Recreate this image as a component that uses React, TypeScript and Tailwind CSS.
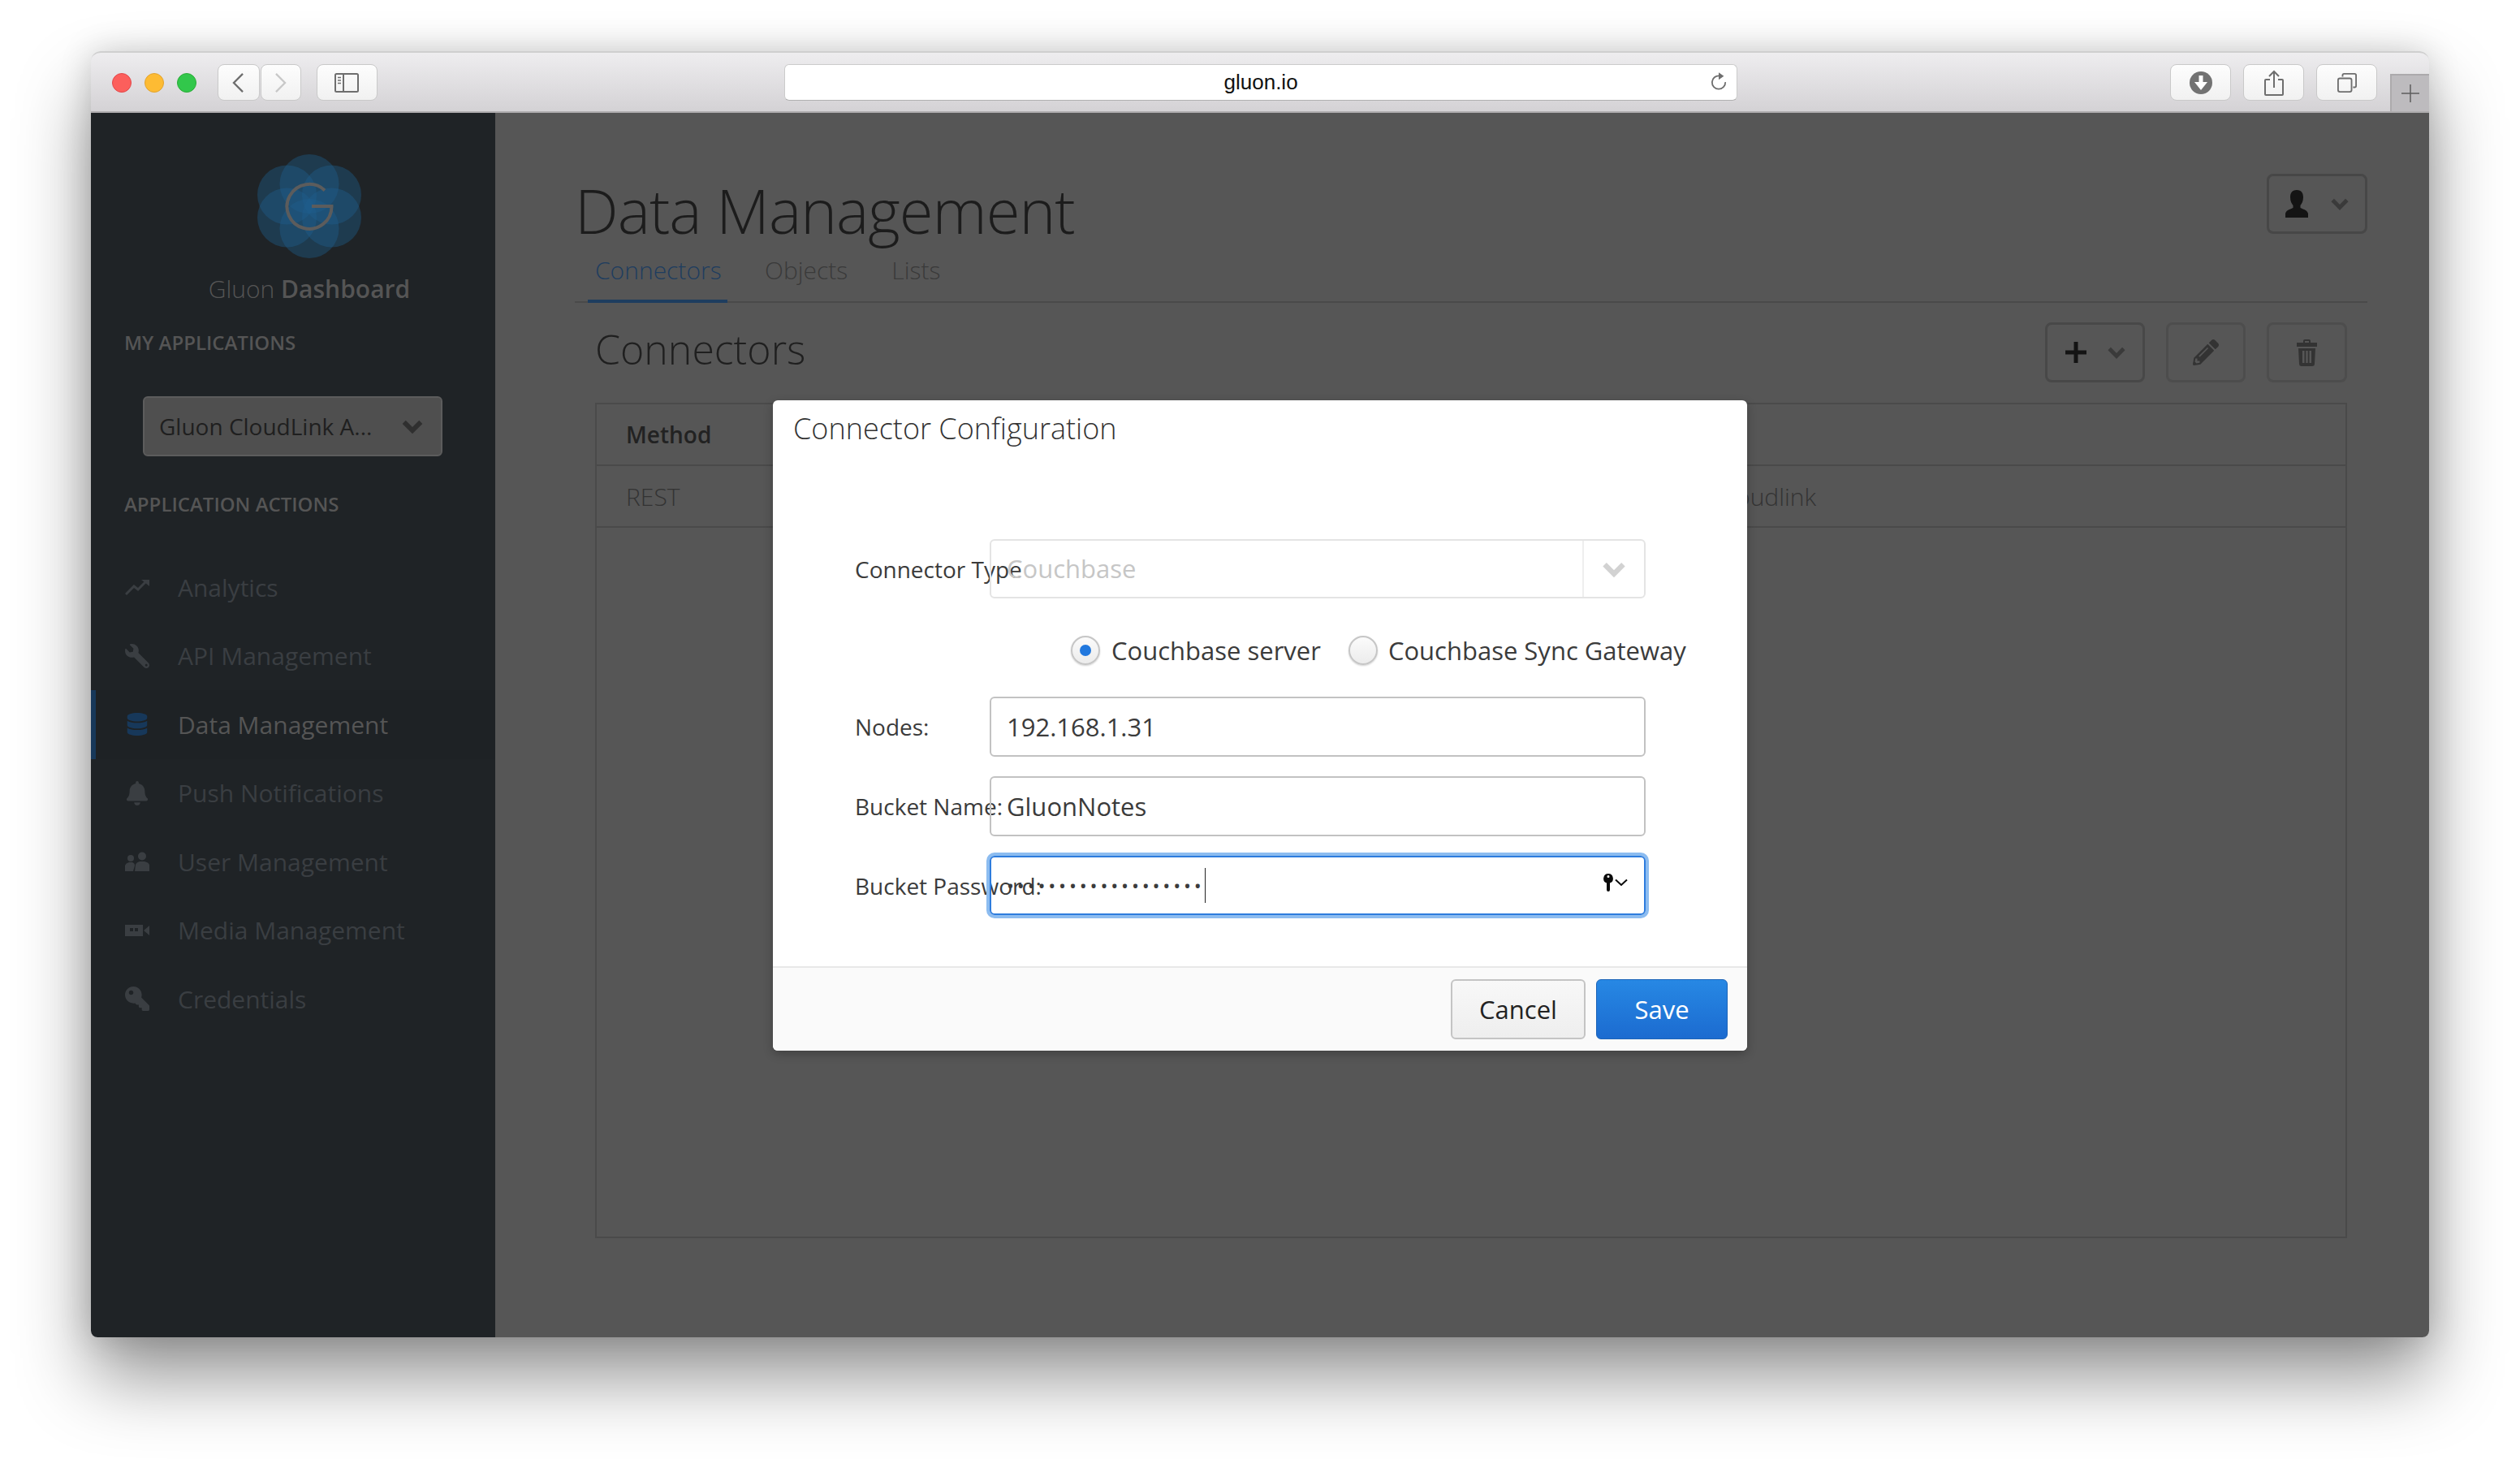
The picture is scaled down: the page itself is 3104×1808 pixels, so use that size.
import { ReactNode } from 'react';
import { FaBell, FaDatabase, FaKey, FaPencilAlt, FaWrench } from 'react-icons/fa';

function ToolButton({ className, children }: { className: string; children: ReactNode }) {
  return (
    <div
      className={`h-[45px] flex items-center justify-center rounded-[8px] border border-[#c9c9c9] bg-gradient-to-b from-[#fdfdfd] to-[#f1f1f1] ${className}`}
    >
      {children}
    </div>
  );
}

function TrendIcon() {
  return (
    <svg viewBox="0 0 30 20" className="w-[30px] h-[20px]" fill="none">
      <path d="M1 19 L11 9 L16 13 L26 3" stroke="#3a3e42" strokeWidth="3" />
      <path d="M20 1 H30 V9 Z" fill="#3a3e42" />
    </svg>
  );
}

function UsersIcon() {
  return (
    <svg viewBox="0 0 30 24" className="w-[30px] h-[24px]" fill="#3a3e42">
      <circle cx="7" cy="8" r="4" />
      <path d="M0 24 V17 Q1 14 5 13 H9 Q12 14 12 17 L10 24 Z" />
      <circle cx="21" cy="5.5" r="5" />
      <path d="M12 24 L13 16 Q14 13 18 12 H24 Q29 13 30 16 V24 Z" />
    </svg>
  );
}

function VideoIcon() {
  return (
    <svg viewBox="0 0 30 14" className="w-[30px] h-[14px]">
      <path fillRule="evenodd" fill="#3a3e42" d="M0 0 H22 V14 H0 Z M6 4 H10 V8 H6 Z M12 4 H16 V8 H12 Z" />
      <path d="M23 7 L30 1 V13 Z" fill="#3a3e42" />
    </svg>
  );
}

function PersonIcon() {
  return (
    <svg viewBox="0 0 28 34" className="w-[28px] h-[34px]" fill="#141414">
      <path d="M14 0 C20 0 22 4 22 9 C22 14 20 17 18.500 19 V22 C23 24 27 25 28 29 V34 H0 V29 C1 25 5 24 9.500 22 V19 C8 17 6 14 6 9 C6 4 8 0 14 0 Z" />
    </svg>
  );
}

function ChevronIcon({ className, color }: { className: string; color: string }) {
  return (
    <svg viewBox="0 0 20 14" className={className} fill="none">
      <path d="M2 3 L10 11 L18 3" stroke={color} strokeWidth="4.500" />
    </svg>
  );
}

function TrashIcon() {
  return (
    <svg viewBox="0 0 25 33" className="w-[25px] h-[33px]">
      <path fill="#333" fillRule="evenodd" d="M8 2 Q8 0 10 0 H15 Q17 0 17 2 V4 H25 V9 H0 V4 H8 Z M10 2 V4 H15 V2 Z" />
      <path fill="#333" fillRule="evenodd" d="M2 11 H23 L22 30 Q22 33 19 33 H6 Q3 33 3 30 Z M7 14 V29 H9.500 V14 Z M11.300 14 V29 H13.700 V14 Z M15.500 14 V29 H18 V14 Z" />
    </svg>
  );
}

function Radio({ checked }: { checked?: boolean }) {
  return (
    <span className="w-[36px] h-[36px] rounded-full border-2 border-[#c6c6c6] bg-gradient-to-b from-[#fbfbfb] to-[#ececec] shadow-[0_1px_2px_rgba(0,0,0,0.18)] flex items-center justify-center">
      {checked && <span className="w-[14px] h-[14px] rounded-full bg-[#2178de]" />}
    </span>
  );
}

function FormRow({ label, children }: { label: string; children: ReactNode }) {
  return (
    <div className="flex items-center">
      <div className="w-[267px] pl-[101px] shrink-0 whitespace-nowrap text-[28px] text-[#3b3b3b]">{label}</div>
      {children}
    </div>
  );
}

const navItems: { label: string; icon: ReactNode; active?: boolean }[] = [
  { label: 'Analytics', icon: <TrendIcon /> },
  { label: 'API Management', icon: <FaWrench className="text-[30px] text-[#3a3e42] -scale-x-100" /> },
  { label: 'Data Management', icon: <FaDatabase className="text-[28px] text-[#17385a]" />, active: true },
  { label: 'Push Notifications', icon: <FaBell className="text-[30px] text-[#3a3e42]" /> },
  { label: 'User Management', icon: <UsersIcon /> },
  { label: 'Media Management', icon: <VideoIcon /> },
  { label: 'Credentials', icon: <FaKey className="text-[30px] text-[#3a3e42] -scale-x-100" /> },
];

export default function App() {
  return (
    <div className="w-[3104px] h-[1808px] bg-white pt-[63px] pl-[112px] overflow-hidden font-['Open_Sans',sans-serif]">
      <div className="relative w-[2880px] h-[1584px] flex flex-col rounded-t-[12px] rounded-b-[8px] shadow-[0_50px_90px_rgba(0,0,0,0.42),0_0_40px_rgba(0,0,0,0.16)]">
        {/* browser toolbar */}
        <div className="h-[76px] shrink-0 flex items-start rounded-t-[12px] border-t-2 border-b-2 border-t-[#cfcfcf] border-b-[#aeacae] bg-gradient-to-b from-[#eeedef] to-[#d4d2d5] pt-[14px]">
          <div className="flex items-center gap-[16px] ml-[26px] h-[45px]">
            <span className="w-[24px] h-[24px] rounded-full border border-[#e3474a] bg-[#fc5f5c]" />
            <span className="w-[24px] h-[24px] rounded-full border border-[#e2a32d] bg-[#fdbb33]" />
            <span className="w-[24px] h-[24px] rounded-full border border-[#2bac37] bg-[#32c74b]" />
          </div>
          <ToolButton className="w-[52px] ml-[26px]">
            <svg viewBox="0 0 16 26" className="w-[15px] h-[24px]" fill="none">
              <path d="M14 1 L2 13 L14 25" stroke="#6e6e6e" strokeWidth="2.500" />
            </svg>
          </ToolButton>
          <ToolButton className="w-[50px] ml-[1px]">
            <svg viewBox="0 0 16 26" className="w-[15px] h-[24px]" fill="none">
              <path d="M2 1 L14 13 L2 25" stroke="#c8c8c8" strokeWidth="2.500" />
            </svg>
          </ToolButton>
          <ToolButton className="w-[75px] ml-[19px]">
            <svg viewBox="0 0 30 24" className="w-[30px] h-[24px]" fill="none" stroke="#6e6e6e" strokeWidth="2">
              <rect x="1" y="1" width="28" height="22" rx="1.500" />
              <path d="M11 1 V23" />
              <path d="M4 5.500 H8 M4 9 H8 M4 12.500 H8" strokeWidth="1.500" />
            </svg>
          </ToolButton>
          <div className="relative w-[1176px] h-[45px] ml-[501px] flex items-center justify-center rounded-[6px] border border-[#cbcbcb] border-b-[#b0b0b0] bg-white">
            <span className="text-[26px] font-['Liberation_Sans',sans-serif] text-[#111]">gluon.io</span>
            <svg viewBox="0 0 22 28" className="absolute right-[12px] top-[9px] w-[20px] h-[26px]" fill="none">
              <path d="M12 4.500 A9 9 0 1 0 20 13" stroke="#6e6e6e" strokeWidth="2" />
              <path d="M11 0 L18 5 L11 10 Z" fill="#6e6e6e" />
            </svg>
          </div>
          <ToolButton className="w-[75px] ml-[533px]">
            <svg viewBox="0 0 28 28" className="w-[28px] h-[28px]">
              <circle cx="14" cy="14" r="14" fill="#727272" />
              <path d="M11.500 5 H16.500 V13 H22 L14 23 L6 13 H11.500 Z" fill="#fff" />
            </svg>
          </ToolButton>
          <ToolButton className="w-[75px] ml-[15px]">
            <svg viewBox="0 0 24 32" className="w-[24px] h-[32px]" fill="none" stroke="#6e6e6e" strokeWidth="2">
              <path d="M7 12 H2 Q1 12 1 13 V30 Q1 31 2 31 H22 Q23 31 23 30 V13 Q23 12 22 12 H17" />
              <path d="M12 22 V2 M6 8 L12 2 L18 8" />
            </svg>
          </ToolButton>
          <ToolButton className="w-[75px] ml-[15px]">
            <svg viewBox="0 0 26 26" className="w-[24px] h-[24px]" fill="none" stroke="#6e6e6e" strokeWidth="2">
              <rect x="1" y="7" width="18" height="18" rx="2.500" />
              <path d="M7 5 V3 Q7 1 9 1 H23 Q25 1 25 3 V17 Q25 19 23 19 H21" />
            </svg>
          </ToolButton>
          <div className="ml-[16px] mt-[-1px] w-[48px] h-[46px] self-end flex items-center justify-center border-t-2 border-l-2 border-[#acaaac] bg-[#bdbbbe]">
            <svg viewBox="0 0 22 22" className="w-[22px] h-[22px]" fill="none" stroke="#5e5e5e" strokeWidth="1.500">
              <path d="M11 0 V22 M0 11 H22" />
            </svg>
          </div>
        </div>

        <div className="flex flex-1 min-h-0">
          {/* sidebar */}
          <div className="w-[498px] shrink-0 rounded-bl-[8px] bg-[#1f2326] flex flex-col">
            <div className="pl-[40px] pt-[51px] flex flex-col items-center">
              <svg viewBox="0 0 128 128" className="w-[128px] h-[128px]" fill="none">
                <g fill="#1f5e8f" fillOpacity="0.4">
                  <circle cx="64" cy="36.500" r="36.500" />
                  <circle cx="64" cy="91.500" r="36.500" />
                  <circle cx="36.500" cy="50" r="36.500" />
                  <circle cx="91.500" cy="50" r="36.500" />
                  <circle cx="36.500" cy="78" r="36.500" />
                  <circle cx="91.500" cy="78" r="36.500" />
                </g>
                <path d="M83 44.500 A27.500 27.500 0 1 0 91.500 64 H67" stroke="#5c5c5c" strokeWidth="4" />
              </svg>
              <div className="mt-[18px] text-[30px] leading-[40px] text-[#555] whitespace-nowrap">
                <span className="font-light">Gluon </span>
                <span className="font-semibold">Dashboard</span>
              </div>
            </div>
            <div className="pl-[41px] mt-[30px] text-[24px] leading-[32px] font-semibold text-[#555]">MY APPLICATIONS</div>
            <div className="ml-[64px] mt-[50px] w-[369px] h-[74px] rounded-[6px] border-2 border-[#5c5c5c] bg-[#4f4f4f] flex items-center justify-between pl-[18px] pr-[22px]">
              <span className="text-[28px] text-[#1f1f1f] whitespace-nowrap">Gluon CloudLink A...</span>
              <ChevronIcon className="w-[26px] h-[18px]" color="#2f2f2f" />
            </div>
            <div className="pl-[41px] mt-[43px] text-[24px] leading-[32px] font-semibold text-[#555]">APPLICATION ACTIONS</div>
            <div className="mt-[44px] flex flex-col">
              {navItems.map(item => (
                <div
                  key={item.label}
                  className={`h-[84.500px] flex items-center border-l-[6px] ${item.active ? 'border-[#17385a] bg-[#1e2225]' : 'border-transparent'}`}
                >
                  <span className="w-[101px] pl-[32px] pr-[31px] h-[32px] flex items-center justify-center shrink-0">{item.icon}</span>
                  <span className={`text-[30px] whitespace-nowrap ${item.active ? 'text-[#555]' : 'text-[#3a3e42]'}`}>{item.label}</span>
                </div>
              ))}
            </div>
          </div>

          {/* page behind the dialog */}
          <div className="flex-1 rounded-br-[8px] bg-[#565656] flex flex-col pl-[98px] pr-[76px]">
            <div className="flex justify-between items-start pt-[75px]">
              <h1 className="text-[76px] leading-[90px] font-light text-[#1c1c1c] tracking-[-1px] whitespace-nowrap pt-[-10px]">Data Management</h1>
              <div className="w-[124px] h-[74px] -mr-[0px] rounded-[8px] border-[3px] border-[#474747] flex items-center justify-center gap-[28px]">
                <PersonIcon />
                <ChevronIcon className="w-[22px] h-[16px]" color="#3a3a3a" />
              </div>
            </div>
            <div className="h-[69px] flex border-b-2 border-[#4a4a4a]">
              <div className="px-[9px] h-[69px] border-b-4 border-[#1e3d5f] w-[172px] ml-[16px] pt-[6px] text-[30px] font-light text-[#1e3d5f] text-center whitespace-nowrap">Connectors</div>
              <div className="ml-[46px] pt-[6px] text-[30px] font-light text-[#3a3a3a]">Objects</div>
              <div className="ml-[54px] pt-[6px] text-[30px] font-light text-[#3a3a3a]">Lists</div>
            </div>
            <div className="ml-[25px] mr-[25px] mt-[24px] flex justify-between items-start h-[99px]">
              <div className="text-[50px] leading-[66px] font-light text-[#1f1f1f]">Connectors</div>
              <div className="flex gap-[26px]">
                <div className="w-[123px] h-[74px] rounded-[8px] border-[3px] border-[#484848] flex items-center justify-center gap-[26px]">
                  <svg viewBox="0 0 26 26" className="w-[26px] h-[26px]" fill="#141414">
                    <path d="M10.500 0 H15.500 V10.500 H26 V15.500 H15.500 V26 H10.500 V15.500 H0 V10.500 H10.500 Z" />
                  </svg>
                  <ChevronIcon className="w-[22px] h-[16px]" color="#3a3a3a" />
                </div>
                <div className="w-[98px] h-[74px] rounded-[8px] border-[3px] border-[#4d4d4d] flex items-center justify-center">
                  <FaPencilAlt className="text-[32px] text-[#333]" />
                </div>
                <div className="w-[99px] h-[74px] rounded-[8px] border-[3px] border-[#4d4d4d] flex items-center justify-center">
                  <TrashIcon />
                </div>
              </div>
            </div>
            <div className="ml-[25px] mr-[25px] h-[1029px] border-2 border-[#4a4a4a] flex flex-col">
              <div className="h-[76px] border-b-2 border-[#4a4a4a] flex items-center pl-[36px] text-[28px] font-semibold text-[#222]">Method</div>
              <div className="h-[76px] border-b-2 border-[#4a4a4a] flex items-center justify-between pl-[36px] text-[30px] font-light text-[#333] pr-[652px]">
                <span>REST</span>
                <span>gluon.cloudlink</span>
              </div>
            </div>
          </div>
        </div>

        {/* dialog */}
        <div className="absolute left-[840px] top-[430px] w-[1200px] h-[801px] rounded-[6px] bg-white flex flex-col shadow-[0_4px_12px_rgba(0,0,0,0.25)]">
          <div className="h-[171px] shrink-0 pl-[25px] pt-[10px] text-[36px] leading-[50px] font-light text-[#333]">Connector Configuration</div>
          <div className="flex-1 flex flex-col">
            <FormRow label="Connector Type">
              <div className="w-[808px] h-[73px] rounded-[6px] border-2 border-[#e4e4e4] flex items-center">
                <span className="flex-1 pl-[19px] text-[31px] text-[#c6c6c6]">Couchbase</span>
                <span className="w-[76px] h-full border-l-2 border-[#eeeeee] flex items-center justify-center">
                  <ChevronIcon className="w-[30px] h-[20px]" color="#d2d2d2" />
                </span>
              </div>
            </FormRow>
            <div className="flex items-center mt-[45px] ml-[367px] h-[38px]">
              <Radio checked />
              <span className="ml-[14px] text-[31px] text-[#3b3b3b] whitespace-nowrap">Couchbase server</span>
              <span className="ml-[34px]">
                <Radio />
              </span>
              <span className="ml-[13px] text-[31px] text-[#3b3b3b] whitespace-nowrap">Couchbase Sync Gateway</span>
            </div>
            <div className="mt-[38px]">
              <FormRow label="Nodes:">
                <div className="w-[808px] h-[74px] rounded-[6px] border-2 border-[#c2c2c2] flex items-center pl-[19px] text-[31px] text-[#3b3b3b]">192.168.1.31</div>
              </FormRow>
            </div>
            <div className="mt-[24px]">
              <FormRow label="Bucket Name:">
                <div className="w-[808px] h-[74px] rounded-[6px] border-2 border-[#c2c2c2] flex items-center pl-[19px] text-[31px] text-[#3b3b3b]">GluonNotes</div>
              </FormRow>
            </div>
            <div className="mt-[24px]">
              <FormRow label="Bucket Password:">
                <div className="relative w-[808px] h-[73px] rounded-[6px] border-2 border-[#2e7cdd] shadow-[0_0_0_4px_#8cbcf0] flex items-center pl-[19px]">
                  <span className="text-[24px] leading-[28px] tracking-[3.800px] text-[#3b3b3b] whitespace-nowrap">•••••••••••••••••••</span>
                  <span className="w-[1px] h-[43px] bg-[#222]" />
                  <span className="absolute right-[20px] top-[20px] flex items-center gap-[2px]">
                    <svg viewBox="0 0 12 22" className="w-[12px] h-[22px]" fill="#0a0a0a">
                      <path fillRule="evenodd" d="M6 0 A6 6 0 0 1 8 11.600 V20 Q8 22 6 22 Q4 22 4 20 V11.600 A6 6 0 0 1 6 0 Z M6 2 A1.500 1.500 0 1 0 6 5 A1.500 1.500 0 1 0 6 2 Z" />
                    </svg>
                    <svg viewBox="0 0 16 10" className="w-[16px] h-[10px]" fill="none">
                      <path d="M1 1.500 L8 8 L15 1.500" stroke="#0a0a0a" strokeWidth="2" />
                    </svg>
                  </span>
                </div>
              </FormRow>
            </div>
          </div>
          <div className="h-[104px] shrink-0 border-t-2 border-[#e8e8e8] bg-[#fafafa] rounded-b-[6px] flex items-start justify-end gap-[13px] pt-[14px] pr-[24px]">
            <div className="w-[166px] h-[74px] rounded-[6px] border-2 border-[#c4c4c4] bg-gradient-to-b from-[#f8f8f8] to-[#eeeeee] flex items-center justify-center text-[31px] text-[#222]">Cancel</div>
            <div className="w-[162px] h-[74px] rounded-[6px] border border-[#1b63b8] bg-gradient-to-b from-[#2788e4] to-[#1c6bd0] flex items-center justify-center text-[31px] text-white">Save</div>
          </div>
        </div>
      </div>
    </div>
  );
}
